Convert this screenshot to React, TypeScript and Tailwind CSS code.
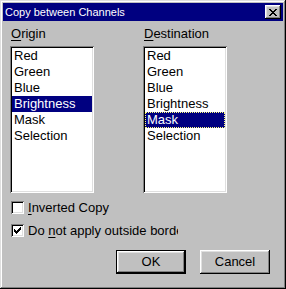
const items = ["Red", "Green", "Blue", "Brightness", "Mask", "Selection"];

const raised =
  "shadow-[inset_-1px_-1px_#000,inset_1px_1px_#fff,inset_-2px_-2px_#808080,inset_2px_2px_#dfdfdf]";
const sunken =
  "shadow-[inset_1px_1px_#808080,inset_-1px_-1px_#fff,inset_2px_2px_#000,inset_-2px_-2px_#dfdfdf]";

const font = { fontFamily: '"Liberation Sans", Arial, sans-serif' };

function ListBox({ selected, focus }: { selected: string; focus?: boolean }) {
  return (
    <div className={`w-[84px] h-[147px] bg-white p-[2px] mt-[4px] ${sunken}`}>
      {items.map((it) => (
        <div
          key={it}
          className={`h-[16px] leading-[16px] pl-[2px] text-[13px] whitespace-nowrap ${
            it === selected ? "bg-[#000080] text-white" : "text-black"
          } ${it === selected && focus ? "outline-1 outline-dotted outline-[#ffff80] -outline-offset-1" : ""}`}
        >
          {it}
        </div>
      ))}
    </div>
  );
}

function CheckBox({ checked }: { checked?: boolean }) {
  return (
    <div className={`w-[13px] h-[13px] bg-white p-[2px] shrink-0 ${sunken}`}>
      {checked && (
        <svg width="9" height="9" viewBox="0 0 9 9" shapeRendering="crispEdges">
          <path
            d="M7 1h1v1h-1zM6 2h2v1h-2zM1 3h1v1h-1zM5 3h3v1h-3zM1 4h2v1h-2zM4 4h3v1h-3zM1 5h5v1h-5zM2 6h3v1h-3zM3 7h1v1h-1z"
            fill="#000"
          />
        </svg>
      )}
    </div>
  );
}

export default function App() {
  return (
    <div
      style={font}
      className="w-[286px] h-[289px] bg-[#c0c0c0] p-[3px] flex flex-col shadow-[inset_-1px_-1px_#000,inset_1px_1px_#dfdfdf,inset_-2px_-2px_#808080,inset_2px_2px_#fff]"
    >
      <div className="h-[18px] bg-[#000080] flex items-center justify-between pl-[2px] pr-[2px]">
        <span className="text-white text-[11px] leading-[18px]">Copy between Channels</span>
        <button className={`w-[16px] h-[14px] bg-[#c0c0c0] flex items-center justify-center ${raised}`}>
          <svg width="8" height="7" viewBox="0 0 8 7" shapeRendering="crispEdges">
            <path
              d="M0 0h2v1h-2zM6 0h2v1h-2zM1 1h2v1h-2zM5 1h2v1h-2zM2 2h4v1h-4zM3 3h2v1h-2zM2 4h4v1h-4zM1 5h2v1h-2zM5 5h2v1h-2zM0 6h2v1h-2zM6 6h2v1h-2z"
              fill="#000"
            />
          </svg>
        </button>
      </div>

      <div className="flex-1 flex flex-col pl-[7px] pr-[13px] pt-[5px]">
        <div className="flex gap-[49px]">
          <div className="flex flex-col">
            <span className="text-[13px] leading-[16px] pl-[1px] text-black">
              <u className="underline-offset-2">O</u>rigin
            </span>
            <ListBox selected="Brightness" />
          </div>
          <div className="flex flex-col">
            <span className="text-[13px] leading-[16px] pl-[1px] text-black">
              <u className="underline-offset-2">D</u>estination
            </span>
            <ListBox selected="Mask" focus />
          </div>
        </div>

        <div className="flex items-center gap-[4px] pl-[1px] mt-[8px] h-[13px]">
          <CheckBox />
          <span className="text-[13px] leading-[16px] text-black whitespace-nowrap">
            <u className="underline-offset-2">I</u>nverted Copy
          </span>
        </div>
        <div className="flex items-center gap-[4px] pl-[1px] mt-[10px] h-[13px]">
          <CheckBox checked />
          <span className="text-[13px] leading-[16px] text-black whitespace-nowrap w-[150px] overflow-hidden">
            Do <u className="underline-offset-2">n</u>ot apply outside border
          </span>
        </div>

        <div className="flex justify-end gap-[14px] mt-[13px]">
          <button className="w-[70px] h-[24px] border border-black bg-[#c0c0c0] p-0">
            <div className={`w-full h-full flex items-center justify-center text-[13px] text-black ${raised}`}>
              OK
            </div>
          </button>
          <button
            className={`w-[70px] h-[24px] bg-[#c0c0c0] flex items-center justify-center text-[13px] text-black ${raised}`}
          >
            Cancel
          </button>
        </div>
      </div>
    </div>
  );
}
